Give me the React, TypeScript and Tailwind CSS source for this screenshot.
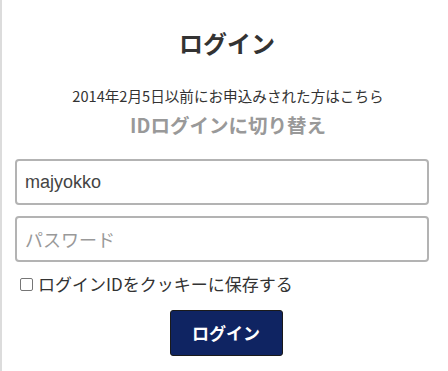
import React from "react";

export default function App() {
  return (
    <div className="w-[448px] h-[371px] bg-white border-l-[2px] border-[#dcdcdc] overflow-hidden" style={{ fontFamily: '"Noto Sans CJK JP", "Noto Sans", sans-serif' }}>
      <div className="flex flex-col items-center pt-[26px] pl-[13px] pr-[19px]">
        <h1 className="ml-[10px] text-[24px] leading-[34px] font-bold text-[#333]">ログイン</h1>
        <p className="ml-[12px] mt-[26px] text-[14.6px] leading-[20px] text-[#333]">2014年2月5日以前にお申込みされた方はこちら</p>
        <p className="ml-[12px] mt-[7px] text-[19.5px] leading-[24px] font-bold text-[#999]">IDログインに切り替え</p>
        <input
          type="text"
          defaultValue="majyokko"
          className="mt-[22px] w-full h-[46px] border-2 border-[#b3b3b3] rounded-[4px] px-[8px] text-[18px] text-[#444] outline-none"
          style={{ fontFamily: '"Liberation Sans", Arial, sans-serif' }}
        />
        <input
          type="password"
          placeholder="パスワード"
          className="mt-[11px] w-full h-[46px] border-2 border-[#b3b3b3] rounded-[4px] px-[8px] text-[18px] text-[#444] placeholder:text-[#999] outline-none"
        />
        <label className="self-start mt-[10px] ml-[5px] flex items-center gap-[5px] text-[17px] leading-[24px] text-[#333]">
          <span className="w-[13px] h-[13px] border border-[#767676] rounded-[2px] bg-white inline-block" />
          <span>ログインIDをクッキーに保存する</span>
        </label>
        <button className="mt-[14px] ml-[8px] w-[113px] h-[46px] bg-[#0f2462] border border-[#1a1a1a] rounded-[3px] text-white font-bold text-[17px]">
          ログイン
        </button>
      </div>
    </div>
  );
}
